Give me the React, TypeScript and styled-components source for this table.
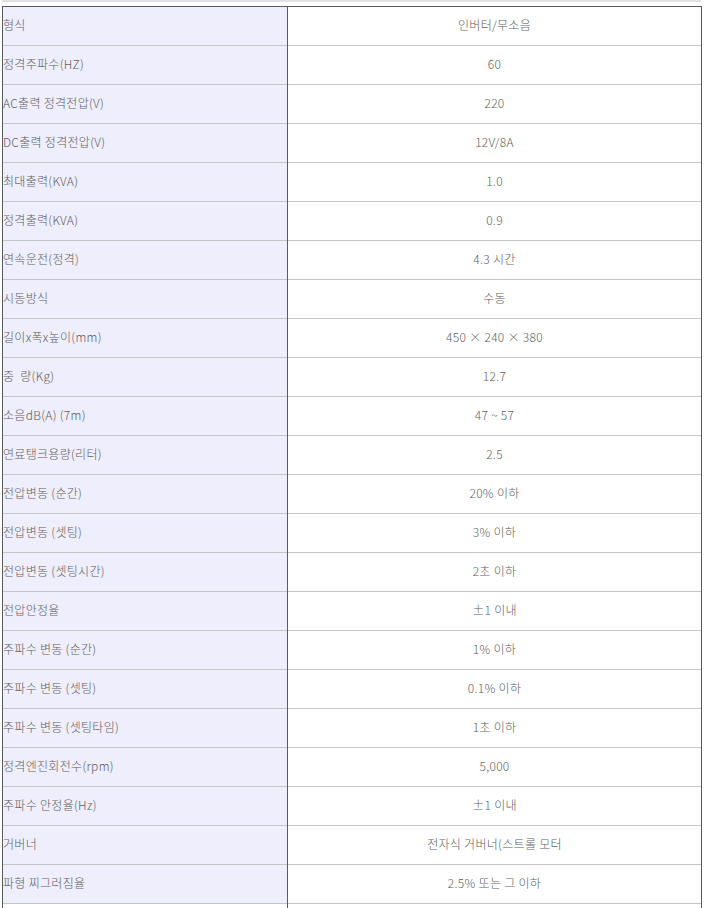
import React from "react";
import styled, { createGlobalStyle } from "styled-components";

const GlobalStyle = createGlobalStyle`
  html, body { margin: 0; padding: 0; background: #ffffff; }
  body { font-family: "Noto Sans CJK KR", "Noto Sans", sans-serif; }
`;

const Page = styled.div`
  padding: 0 3px 0 2px;
`;

const TopRule = styled.div`
  height: 2px;
  background: #e2e2e2;
  margin-bottom: 4px;
`;

const Table = styled.div`
  width: 700px;
  box-sizing: border-box;
  border: 1px solid #5a5a5a;
  border-bottom: none;
  display: grid;
  grid-template-columns: 284px 1px 413px;
`;

const Cell = styled.div`
  height: 38px;
  box-sizing: border-box;
  padding-bottom: 3px;
  border-bottom: 1px solid #c6c6c6;
  display: flex;
  align-items: center;
  font-size: 12px;
  font-weight: 300;
  letter-spacing: 0.3px;
  color: #606060;
  white-space: pre;
`;

const LabelCell = styled(Cell)`
  height: 39px;
  background: #efeefc;
`;

const ValueCell = styled(Cell)`
  height: 39px;
  background: #ffffff;
  justify-content: center;
`;

const Divider = styled.div`
  background: #5a5a5a;
`;

const FillCell = styled.div`
  height: 6px;
  background: #ffffff;
`;

const rows: [string, string][] = [
  ["형식", "인버터/무소음"],
  ["정격주파수(HZ)", "60"],
  ["AC출력 정격전압(V)", "220"],
  ["DC출력 정격전압(V)", "12V/8A"],
  ["최대출력(KVA)", "1.0"],
  ["정격출력(KVA)", "0.9"],
  ["연속운전(정격)", "4.3 시간"],
  ["시동방식", "수동"],
  ["길이x폭x높이(mm)", "450 × 240 × 380"],
  ["중  량(Kg)", "12.7"],
  ["소음dB(A) (7m)", "47 ~ 57"],
  ["연료탱크용량(리터)", "2.5"],
  ["전압변동 (순간)", "20% 이하"],
  ["전압변동 (셋팅)", "3% 이하"],
  ["전압변동 (셋팅시간)", "2초 이하"],
  ["전압안정율", "±1 이내"],
  ["주파수 변동 (순간)", "1% 이하"],
  ["주파수 변동 (셋팅)", "0.1% 이하"],
  ["주파수 변동 (셋팅타임)", "1초 이하"],
  ["정격엔진회전수(rpm)", "5,000"],
  ["주파수 안정율(Hz)", "±1 이내"],
  ["거버너", "전자식 거버너(스트롤 모터"],
  ["파형 찌그러짐율", "2.5% 또는 그 이하"],
];

export default function App() {
  return (
    <>
      <GlobalStyle />
      <Page>
        <TopRule />
        <Table>
          {rows.map(([label, value], i) => (
            <React.Fragment key={i}>
              <LabelCell>{label}</LabelCell>
              <Divider />
              <ValueCell>{value}</ValueCell>
            </React.Fragment>
          ))}
          <FillCell />
          <Divider />
          <FillCell />
        </Table>
      </Page>
    </>
  );
}
